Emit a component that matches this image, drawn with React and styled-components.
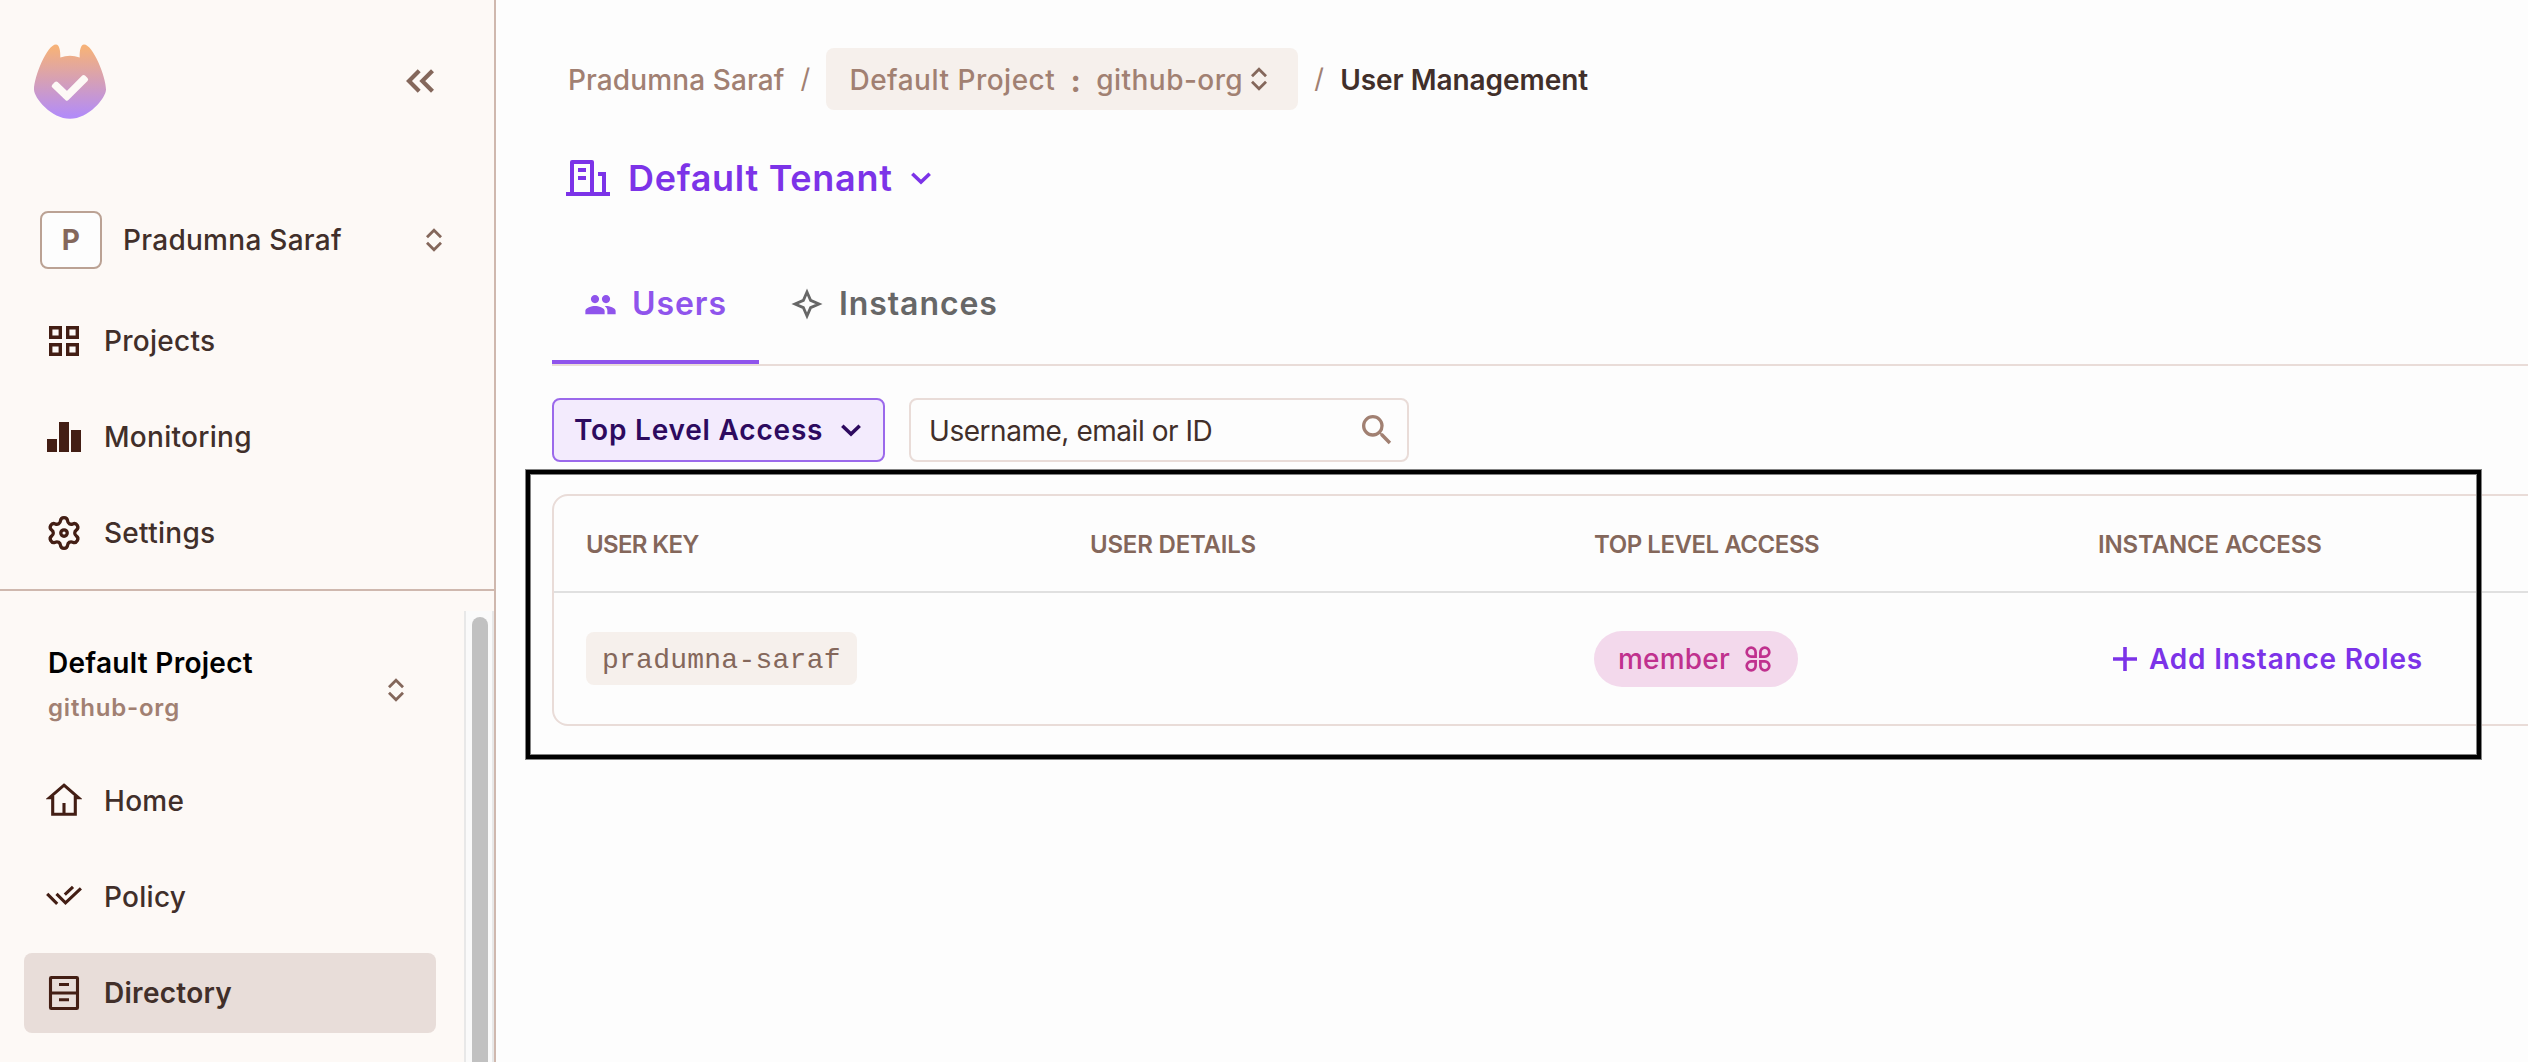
import React from 'react';
import styled, { createGlobalStyle, css } from 'styled-components';
import { MdGroup, MdSearch } from 'react-icons/md';

const GlobalStyle = createGlobalStyle`
  *, *::before, *::after { box-sizing: border-box; }
  body { margin: 0; overflow: hidden; }
  svg { display: block; flex: none; }
`;

const color = {
  ink: '#412f2a',
  icon: '#431e14',
  brown: '#84675b',
  sand: '#a18072',
  line: '#e9dcd8',
  sideLine: '#cfb8ae',
  violet: '#7c33e8',
};

const Page = styled.div`
  position: relative;
  display: flex;
  width: 100vw;
  height: 100vh;
  overflow: hidden;
  background: #fdfdfd;
  color: ${color.ink};
  font-family: Inter, 'Liberation Sans', sans-serif;
  font-size: 28px;
`;

const Label = styled.span`
  white-space: nowrap;
  padding-top: ${(p) => p.$drop || 0}px;
  font-size: ${(p) => p.$size || 28}px;
  font-weight: ${(p) => p.$weight || 500};
  letter-spacing: ${(p) => p.$track ?? 0.28}px;
  color: ${(p) => p.$color || 'inherit'};
  line-height: ${(p) => p.$line || 40}px;
`;

/* Sidebar */
const Sidebar = styled.aside`
  flex: none;
  display: flex;
  flex-direction: column;
  width: 496px;
  border-right: 2px solid ${color.sideLine};
  background: #fdf9f6;
`;
const SideTop = styled.div`
  height: 591px;
  flex: none;
  border-bottom: 2px solid ${color.sideLine};
`;
const Brand = styled.div`
  display: flex;
  align-items: center;
  justify-content: space-between;
  height: 162px;
  padding: 0 60px 0 34px;
`;
const OrgSwitch = styled.div`
  display: flex;
  align-items: center;
  height: 58px;
  margin-top: 49px;
  padding: 0 52px 0 40px;
`;
const OrgBadge = styled.div`
  display: flex;
  align-items: center;
  justify-content: center;
  width: 62px;
  height: 58px;
  margin-right: 21px;
  border: 2px solid #bba294;
  border-radius: 8px;
  background: #fdfdfd;
`;
const Push = styled.div`
  margin-left: auto;
  margin-top: ${(p) => p.$top || 0}px;
`;
const Nav = styled.nav`
  display: flex;
  flex-direction: column;
  gap: 16px;
  padding: 32px 28px 0 24px;
`;
const NavRow = styled.a`
  display: flex;
  align-items: center;
  gap: 22px;
  height: 80px;
  padding-left: 22px;
  border-radius: 8px;
  ${(p) => p.$active && css`background: #e8ddd9;`}
`;
const Scroller = styled.div`
  flex: 1;
  display: flex;
  margin-top: 20px;
  min-height: 0;
`;
const ScrollBody = styled.div`
  width: 464px;
  padding-top: 28px;
`;
const ScrollTrack = styled.div`
  width: 30px;
  padding: 6px 4px 0 6px;
  border: 2px solid #e8e8e8;
  border-width: 0 2px;
  background: #fafafa;
`;
const ScrollThumb = styled.div`
  width: 16px;
  height: 700px;
  border-radius: 8px;
  background: #c1c1c1;
`;
const ProjectSwitch = styled.div`
  display: flex;
  align-items: center;
  height: 90px;
  padding: 0 60px 0 48px;
`;
const Stack = styled.div`
  display: flex;
  flex-direction: column;
`;

/* Main column */
const Main = styled.main`
  flex: 1;
  min-width: 0;
  overflow: hidden;
  padding: 48px 0 0 56px;
`;
const Crumbs = styled.div`
  display: flex;
  align-items: center;
  height: 62px;
  padding-left: 16px;
`;
const Crumb = styled(Label)`
  padding-top: 2px;
`;
const Separator = styled.span`
  width: ${(p) => p.$width}px;
  text-align: center;
  font-size: 27px;
  font-weight: ${(p) => p.$weight || 400};
  line-height: 40px;
  color: ${color.sand};
`;
const ProjectChip = styled.div`
  display: flex;
  align-items: center;
  height: 62px;
  padding: 0 31px 0 23px;
  border-radius: 8px;
  background: #f6f0ec;
`;
const ChipColon = styled(Separator)`
  padding-top: 4px;
  font-size: 31px;
  font-weight: 700;
`;
const ChipIcon = styled.div`
  margin-left: 8px;
`;
const Tenant = styled.div`
  display: flex;
  align-items: center;
  height: 60px;
  margin-top: 38px;
  padding-left: 14px;
  color: ${color.violet};
`;
const TenantName = styled(Label)`
  margin: 0 18px 0 18px;
`;
const Tabs = styled.div`
  display: flex;
  height: 120px;
  margin-top: 38px;
  border-bottom: 2px solid ${color.line};
`;
const Tab = styled.div`
  display: flex;
  align-items: center;
  gap: ${(p) => p.$gap}px;
  height: 118px;
  padding: 2px 32px 0;
  border-bottom: 4px solid ${(p) => (p.$active ? '#8f54ec' : 'transparent')};
  color: ${(p) => (p.$active ? '#8f54ec' : '#676767')};
`;
const Filters = styled.div`
  display: flex;
  gap: 24px;
  margin-top: 32px;
`;
const AccessButton = styled.button`
  display: flex;
  align-items: center;
  justify-content: space-between;
  width: 333px;
  height: 64px;
  padding: 0 22px 0 20px;
  border: 2px solid #9b69eb;
  border-radius: 8px;
  background: #f3ebfd;
  color: #2d0a5f;
  font-family: inherit;
`;
const SearchBox = styled.div`
  display: flex;
  align-items: center;
  justify-content: space-between;
  width: 500px;
  height: 64px;
  padding: 0 10px 0 18px;
  border: 2px solid ${color.line};
  border-radius: 8px;
`;
const Table = styled.div`
  width: 2200px;
  margin-top: 32px;
  border: 2px solid ${color.line};
  border-radius: 16px;
`;
const TableRow = styled.div`
  display: grid;
  grid-template-columns: repeat(4, 504px);
  align-items: center;
  height: ${(p) => p.$height}px;
  padding-left: 32px;
  ${(p) => p.$head && css`border-bottom: 2px solid #e0e0e0;`}
`;
const Cell = styled.div`
  display: flex;
  align-items: center;
  padding-left: ${(p) => p.$inset || 0}px;
`;
const KeyChip = styled.code`
  height: 53px;
  padding: 0 16px;
  border-radius: 8px;
  background: #f6f0ec;
  color: ${color.brown};
  font: 400 28px/57px 'Liberation Mono', monospace;
  letter-spacing: 0.25px;
`;
const RolePill = styled.div`
  display: flex;
  align-items: center;
  justify-content: space-between;
  width: 204px;
  height: 56px;
  padding: 0 27px 0 24px;
  border-radius: 28px;
  background: #f3d9ec;
  color: #c0318e;
`;
const AddRoles = styled.div`
  display: flex;
  align-items: center;
  gap: 12px;
  color: ${color.violet};
`;
const Highlight = styled.div`
  position: absolute;
  left: 526px;
  top: 470px;
  width: 1955px;
  height: 289px;
  border: 4px solid #000;
  box-shadow: 0 0 0 1px #828282, inset 0 0 0 1px #828282;
  pointer-events: none;
`;

/* Icons */
const Logo = () => (
  <svg width="72" height="75" viewBox="0 0 72 75">
    <defs>
      <linearGradient id="fox" x1="0" y1="0" x2="0" y2="1">
        <stop offset="0.04" stopColor="#f6b279" />
        <stop offset="0.96" stopColor="#b38cf7" />
      </linearGradient>
    </defs>
    <path
      fill="url(#fox)"
      d="M22 .4C25.2 .4 26.6 6.5 26.3 13.4Q36 10.2 45.7 13.4C45.4 6.5 46.8 .4 50 .4C59 .4 72 33 72 45.5C72 54 54.5 74.8 36 74.8C17.5 74.8 0 54 0 45.5C0 33 13 .4 22 .4Z"
    />
    <path
      fill="#fdf9f6"
      stroke="#fdf9f6"
      strokeWidth="4"
      strokeLinejoin="round"
      d="M19.7 42.1L22.3 39.5L33 49.6L49.6 33L52.1 35.5L33 54.7Z"
    />
  </svg>
);
const Collapse = () => (
  <svg width="28" height="24" viewBox="0 0 28 24" fill="none" stroke={color.brown} strokeWidth="4.2">
    <path d="M13.2 1.8L3 12L13.2 22.2M26.5 1.8L16.3 12L26.5 22.2" />
  </svg>
);
const UpDown = () => (
  <svg width="16" height="24" viewBox="0 0 16 24" fill="none" stroke={color.brown} strokeWidth="2.8">
    <path d="M1 9.2L8 2.2L15 9.2M1 14.8L8 21.8L15 14.8" />
  </svg>
);
const Chevron = () => (
  <svg width="20" height="13" viewBox="0 0 20 13" fill="none" stroke="currentColor" strokeWidth="3.6">
    <path d="M1.3 1.8L10 10L18.7 1.8" />
  </svg>
);
const NavIcon = ({ children }) => (
  <svg width="36" height="36" viewBox="0 0 36 36" fill="none" stroke={color.icon} strokeWidth="3.1">
    {children}
  </svg>
);
const GridIcon = () => (
  <NavIcon>
    <path strokeWidth="3.4" d="M4.7 4.7h9.6v9.6h-9.6zM21.7 4.7h9.6v9.6h-9.6zM4.7 21.7h9.6v9.6h-9.6zM21.7 21.7h9.6v9.6h-9.6z" />
  </NavIcon>
);
const BarsIcon = () => (
  <NavIcon>
    <path stroke="none" fill={color.icon} d="M1 20h10v13H1zM13 3h10v30H13zM25 11h10v22H25z" />
  </NavIcon>
);
const GearIcon = () => (
  <NavIcon>
    <g transform="translate(-0.4 -0.4) scale(1.535)" strokeWidth="2.15" strokeLinejoin="round">
      <path d="M9.671 4.136a2.34 2.34 0 0 1 4.659 0 2.34 2.34 0 0 0 3.319 1.915 2.34 2.34 0 0 1 2.33 4.033 2.34 2.34 0 0 0 0 3.831 2.34 2.34 0 0 1-2.33 4.033 2.34 2.34 0 0 0-3.319 1.915 2.34 2.34 0 0 1-4.659 0 2.34 2.34 0 0 0-3.32-1.915 2.34 2.34 0 0 1-2.33-4.033 2.34 2.34 0 0 0 0-3.831A2.34 2.34 0 0 1 6.35 6.051a2.34 2.34 0 0 0 3.319-1.915" />
      <circle cx="12" cy="12" r="2.1" />
    </g>
  </NavIcon>
);
const HomeIcon = () => (
  <NavIcon>
    <path d="M18 2.2L32.4 14.6H29.3V31.3H6.7V14.6H3.6ZM18 20V31" />
  </NavIcon>
);
const ChecksIcon = () => (
  <NavIcon>
    <path d="M1.2 14.8L11.2 24.8M10.5 14.8L19.5 23.8L34.9 9.3M18.8 15.6L27 7.8" />
  </NavIcon>
);
const CabinetIcon = () => (
  <NavIcon>
    <rect x="4.5" y="2.5" width="27" height="31" rx="0.8" />
    <path d="M4 18H32M13 9.5H23M13 24.8H23" />
  </NavIcon>
);
const BuildingIcon = () => (
  <svg width="44" height="36" viewBox="0 0 44 36" fill="none" stroke="currentColor" strokeWidth="4">
    <path strokeLinejoin="round" d="M6 34V2H26V34" />
    <path d="M0 34H44M12 10H20M12 18H20M32 14H38V34" />
  </svg>
);
const SparkleIcon = () => (
  <svg width="32" height="32" viewBox="0 0 32 32" fill="none" stroke="currentColor" strokeWidth="2.8">
    <path d="M16 4L19.6 12.4L28 16L19.6 19.6L16 28L12.4 19.6L4 16L12.4 12.4Z" />
  </svg>
);
const PetalsIcon = () => (
  <svg width="26" height="26" viewBox="0 0 26 26" fill="none" stroke="currentColor" strokeWidth="2.7">
    <path d="M10.6 10.6H6.2A4.45 4.45 0 1 1 10.6 6.2ZM15.4 10.6V6.2A4.45 4.45 0 1 1 19.8 10.6ZM10.6 15.4V19.8A4.45 4.45 0 1 1 6.2 15.4ZM15.4 15.4H19.8A4.45 4.45 0 1 1 15.4 19.8Z" />
  </svg>
);
const PlusIcon = () => (
  <svg width="24" height="24" viewBox="0 0 24 24" fill="none" stroke="currentColor" strokeWidth="3.6">
    <path d="M12 0V24M0 12H24" />
  </svg>
);

const globalNav = [
  ['Projects', GridIcon],
  ['Monitoring', BarsIcon],
  ['Settings', GearIcon],
];
const projectNav = [
  ['Home', HomeIcon],
  ['Policy', ChecksIcon],
  ['Directory', CabinetIcon],
];
const columns = [
  ['USER KEY', -0.65],
  ['USER DETAILS', -0.2],
  ['TOP LEVEL ACCESS', -0.45],
  ['INSTANCE ACCESS', -0.14],
];

const NavList = ({ items, active }) => (
  <Nav>
    {items.map(([name, Icon]) => (
      <NavRow key={name} $active={name === active}>
        <Icon />
        <Label $weight={name === active ? 600 : 500}>{name}</Label>
      </NavRow>
    ))}
  </Nav>
);

export default function App() {
  return (
    <Page>
      <GlobalStyle />
      <Sidebar>
        <SideTop>
          <Brand>
            <Logo />
            <Collapse />
          </Brand>
          <OrgSwitch>
            <OrgBadge>
              <Label $weight={700} $color={color.brown}>P</Label>
            </OrgBadge>
            <Label>Pradumna Saraf</Label>
            <Push><UpDown /></Push>
          </OrgSwitch>
          <NavList items={globalNav} />
        </SideTop>
        <Scroller>
          <ScrollBody>
            <ProjectSwitch>
              <Stack>
                <Label $weight={600} $color="#000" $line={48}>Default Project</Label>
                <Label $size={24} $weight={600} $track={0.8} $color={color.sand} $line={42}>github-org</Label>
              </Stack>
              <Push $top={12}><UpDown /></Push>
            </ProjectSwitch>
            <NavList items={projectNav} active="Directory" />
          </ScrollBody>
          <ScrollTrack><ScrollThumb /></ScrollTrack>
        </Scroller>
      </Sidebar>

      <Main>
        <Crumbs>
          <Crumb $track={0.1} $color={color.sand}>Pradumna Saraf</Crumb>
          <Separator $width={42}>/</Separator>
          <ProjectChip>
            <Crumb $track={0.5} $color={color.sand}>Default Project</Crumb>
            <ChipColon $width={41}>:</ChipColon>
            <Crumb $track={0.44} $color={color.sand}>github-org</Crumb>
            <ChipIcon><UpDown /></ChipIcon>
          </ProjectChip>
          <Separator $width={42}>/</Separator>
          <Crumb $weight={560} $track={-0.05}>User Management</Crumb>
        </Crumbs>

        <Tenant>
          <BuildingIcon />
          <TenantName $size={36} $weight={600} $track={0.7} $line={56}>Default Tenant</TenantName>
          <Chevron />
        </Tenant>

        <Tabs>
          <Tab $active $gap={15}>
            <MdGroup size={33} />
            <Label $size={32} $weight={600} $track={0.92}>Users</Label>
          </Tab>
          <Tab $gap={16}>
            <SparkleIcon />
            <Label $size={32} $weight={600} $track={0.92}>Instances</Label>
          </Tab>
        </Tabs>

        <Filters>
          <AccessButton>
            <Label $weight={600} $track={0.8}>Top Level Access</Label>
            <Chevron />
          </AccessButton>
          <SearchBox>
            <Label $weight={370} $track={-0.46} $drop={2}>Username, email or ID</Label>
            <MdSearch size={40} color={color.sand} />
          </SearchBox>
        </Filters>

        <Table>
          <TableRow $head $height={97}>
            {columns.map(([name, track]) => (
              <Cell key={name}>
                <Label $size={24} $weight={600} $track={track} $color={color.brown} $drop={2}>{name}</Label>
              </Cell>
            ))}
          </TableRow>
          <TableRow $height={131}>
            <Cell><KeyChip>pradumna-saraf</KeyChip></Cell>
            <Cell />
            <Cell>
              <RolePill>
                <Label $track={0.2}>member</Label>
                <PetalsIcon />
              </RolePill>
            </Cell>
            <Cell $inset={15}>
              <AddRoles>
                <PlusIcon />
                <Label $weight={600} $track={0.8}>Add Instance Roles</Label>
              </AddRoles>
            </Cell>
          </TableRow>
        </Table>
      </Main>
      <Highlight />
    </Page>
  );
}
